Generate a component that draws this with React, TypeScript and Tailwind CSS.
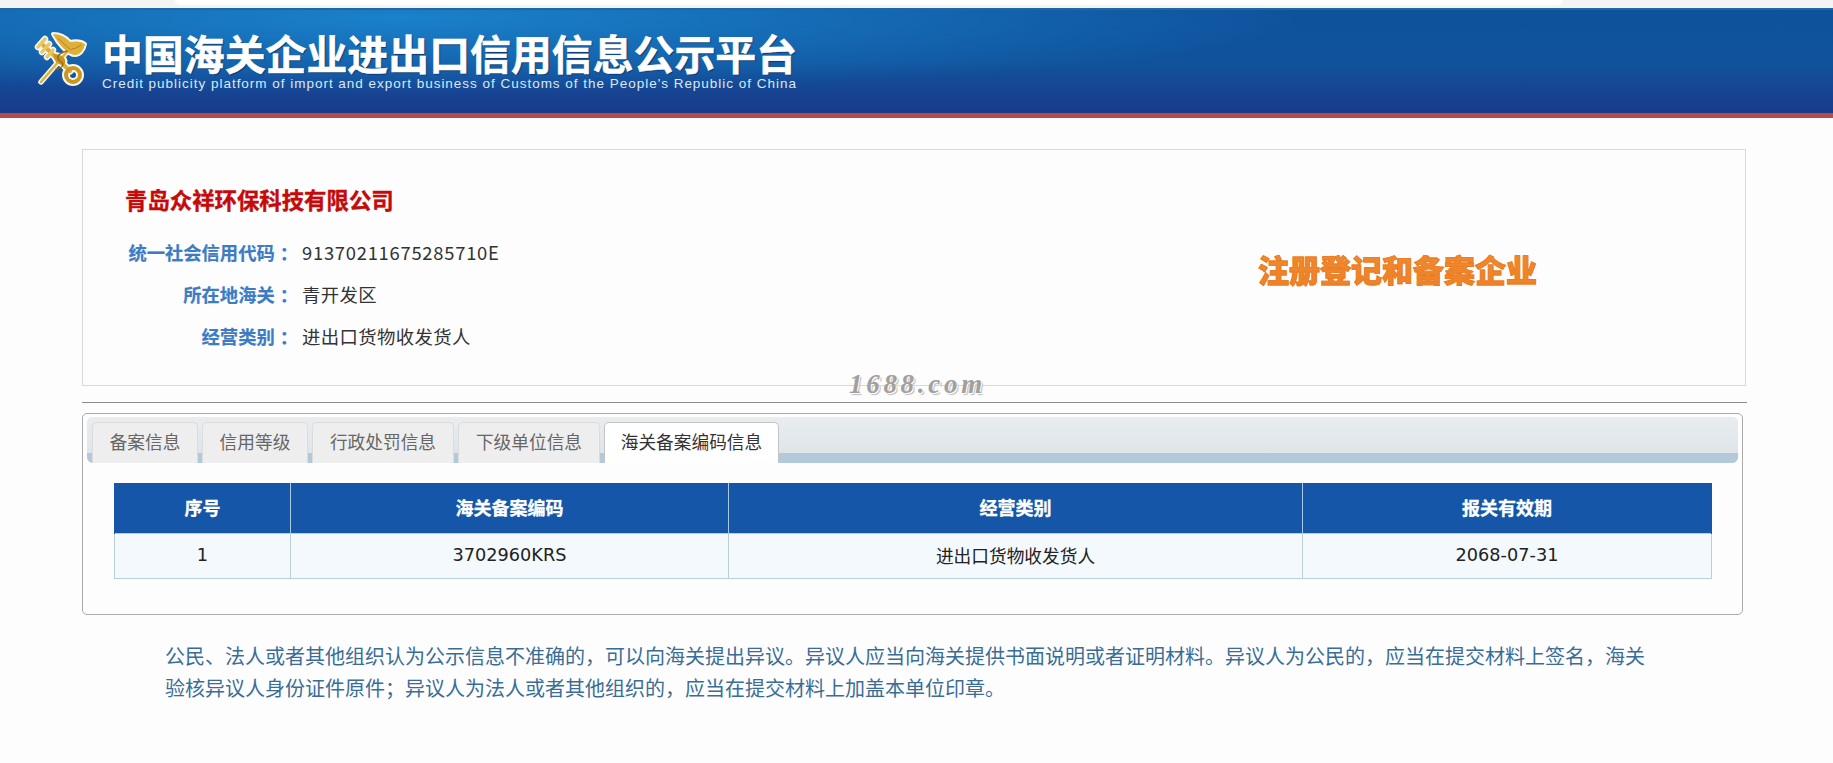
import React from 'react';

const tabs = [
  { label: '备案信息', width: 'w-[106px]' },
  { label: '信用等级', width: 'w-[106px]' },
  { label: '行政处罚信息', width: 'w-[142px]' },
  { label: '下级单位信息', width: 'w-[142px]' },
];

// full-width punctuation, same as the page
const COLON = '\uFF1A';
const COMMA = '\uFF0C';
const SEMI = '\uFF1B';

const infoRows = [
  { label: '统一社会信用代码', value: '91370211675285710E', spacing: 'tracking-[0.04em]' },
  { label: '所在地海关', value: '青开发区', spacing: 'tracking-[0.02em]' },
  { label: '经营类别', value: '进出口货物收发货人', spacing: 'tracking-[0.02em]' },
];

const headers = ['序号', '海关备案编码', '经营类别', '报关有效期'];

const notice = `公民、法人或者其他组织认为公示信息不准确的${COMMA}可以向海关提出异议。异议人应当向海关提供书面说明或者证明材料。异议人为公民的${COMMA}应当在提交材料上签名${COMMA}海关验核异议人身份证件原件${SEMI}异议人为法人或者其他组织的${COMMA}应当在提交材料上加盖本单位印章。`;

const Emblem = () => (
  <svg viewBox="0 0 54 54" className="w-[54px] h-[54px] shrink-0" fill="none">
    <g stroke="#f8f6ee" strokeLinecap="round" strokeLinejoin="round">
      <path d="M9 13 L36 39" strokeWidth="7.5" />
      <circle cx="39" cy="43" r="7" strokeWidth="8" />
      <path d="M4 15 L11 7 M8 20 L15 12 M13 25 L19 18" strokeWidth="6.5" />
      <path d="M38 14 L7 50" strokeWidth="5.5" />
      <path d="M19 2 C26 2 32 5 36 10 C41 9 47 9 51 12 C50 18 46 23 41 23 C34 23 24 12 19 2 Z" strokeWidth="4" fill="#f8f6ee" />
      <path d="M20 22 C28 22 34 27 30 33 C24 33 19 29 20 22 Z" strokeWidth="4" fill="#f8f6ee" />
    </g>
    <g strokeLinecap="round" strokeLinejoin="round">
      <path d="M9 13 L36 39" stroke="#dcae38" strokeWidth="4" />
      <circle cx="39" cy="43" r="7" stroke="#c9961f" strokeWidth="4" />
      <path d="M4 15 L11 7 M8 20 L15 12 M13 25 L19 18" stroke="#e8c766" strokeWidth="3.4" />
      <path d="M38 14 L7 50" stroke="#e0b23c" strokeWidth="2.6" />
      <path d="M19 2 C26 2 32 5 36 10 C41 9 47 9 51 12 C50 18 46 23 41 23 C34 23 24 12 19 2 Z" fill="#deb03a" />
      <path d="M24 6 C28 10 32 14 37 18 M47 13 C44 15 41 17 38 17" stroke="#a9781a" strokeWidth="0.8" />
      <path d="M20 22 C28 22 34 27 30 33 C24 33 19 29 20 22 Z" fill="#c9961f" />
      <path d="M33 19 C25 21 21 25 26 29 C31 32 29 36 22 37" stroke="#98690f" strokeWidth="1.4" />
    </g>
  </svg>
);

export default function App() {
  return (
    <div className="relative w-[1833px] h-[763px] overflow-hidden bg-[#fdfdfe] text-[#333] font-['Noto_Sans_CJK_SC','Noto_Sans',sans-serif]">
      {/* top strip */}
      <div className="h-2 bg-[#f4f4f5] pl-[175px] pr-[270px]">
        <div className="h-[5px] bg-white rounded-b-lg"></div>
      </div>

      {/* header banner */}
      <div className="h-[105px] pl-[34px] flex items-start border-t-[2px] border-[#1f68a8] bg-[radial-gradient(ellipse_900px_75px_at_400px_8px,rgba(27,132,205,0.95)_0%,rgba(27,132,205,0)_100%),linear-gradient(to_bottom,#0f529c_0%,#10539c_50%,#1b3a8c_100%)]">
        <div className="mt-[22px]"><Emblem /></div>
        <div className="ml-[14px] mt-[20px] w-[700px]">
          <div className="text-[40.9px] leading-[46px] font-bold text-white whitespace-nowrap [-webkit-text-stroke:0.5px_#ffffff] [text-shadow:1px_1px_1px_#0b2f66]">中国海关企业进出口信用信息公示平台</div>
          <div className="text-[13.5px] leading-[14px] mt-px tracking-[0.98px] text-[#dce8f3] whitespace-nowrap font-['Liberation_Sans',sans-serif]">Credit publicity platform of import and export business of Customs of the People's Republic of China</div>
        </div>
      </div>
      <div className="h-[5px] bg-[#b94a4a]"></div>

      {/* company card */}
      <div className="ml-[82px] mt-[31px] w-[1664px] h-[237px] border border-[#d8d8d8] flex justify-between">
        <div className="pl-[42px] pt-[31px]">
          <h1 className="text-[22.4px] leading-[36px] font-bold text-[#c40a0a] [-webkit-text-stroke:0.4px_#c40a0a]">青岛众祥环保科技有限公司</h1>
          <div className="mt-[15px] flex flex-col">
            {infoRows.map(row => (
              <div key={row.label} className="flex h-[42px] items-center">
                <span className="w-[173px] text-[18.3px] text-right font-bold text-[#3d7cc4] [-webkit-text-stroke:0.2px_#3d7cc4]">{row.label}<span className="pl-[5px]">{COLON}</span></span>
                <span className={`ml-[4px] text-[18.4px] text-[#333] ${row.spacing}`}>{row.value}</span>
              </div>
            ))}
          </div>
        </div>
        <div className="mr-[208px] mt-[100px] text-[31px] leading-[38px] font-black text-transparent bg-clip-text bg-gradient-to-b from-[#f08a2e] to-[#e76a14] whitespace-nowrap [-webkit-text-stroke:0.8px_#ec7a1f]">注册登记和备案企业</div>
      </div>

      {/* watermark */}
      <div className="absolute left-[849px] top-[368px] text-[27px] leading-[32px] font-bold italic tracking-[3.7px] text-[#a0a0a0] font-['Liberation_Serif',serif] [text-shadow:1px_1px_0_#fff,2px_2px_1px_#bbb]">1688.com</div>

      <div className="ml-[82px] mt-4 w-[1665px] h-px bg-[#8f8a90]"></div>

      {/* tabs panel */}
      <div className="ml-[82px] mt-[10px] w-[1661px] h-[202px] border border-[#aaa] rounded-[5px] px-1 pt-[3px]">
        <div className="relative h-[46px] rounded-t-[5px] rounded-b-[6px] bg-gradient-to-b from-[#e9edf0] to-[#dbe2e7] overflow-hidden">
          <div className="absolute left-0 right-0 bottom-0 h-[10px] bg-[#b3c9d9]"></div>
          <div className="relative flex items-end h-full pl-[5px] gap-[4px]">
            {tabs.map(tab => (
              <div key={tab.label} className={`${tab.width} h-[41px] pb-[3px] flex items-center justify-center rounded-t-[5px] border border-b-0 border-[#dcdcdc] bg-[#eeeeee] text-[17.7px] text-[#666]`}>{tab.label}</div>
            ))}
            <div className="w-[175px] h-[41px] pb-[3px] flex items-center justify-center rounded-t-[5px] border border-b-0 border-[#c4c4c4] bg-white text-[17.7px] text-[#333]">海关备案编码信息</div>
          </div>
        </div>

        <table className="ml-[27px] mt-[20px] w-[1597px] table-fixed border-collapse">
          <colgroup>
            <col className="w-[176px]" />
            <col className="w-[438px]" />
            <col className="w-[574px]" />
            <col className="w-[409px]" />
          </colgroup>
          <thead>
            <tr className="h-[50px] bg-[#1556a8]">
              {headers.map(h => (
                <th key={h} className="border-x border-[#a9c8e2] first:border-l-[#1556a8] last:border-r-[#1556a8] text-[18px] font-bold text-white [-webkit-text-stroke:0.3px_#ffffff] text-center">{h}</th>
              ))}
            </tr>
          </thead>
          <tbody>
            <tr className="h-[45px] bg-[#f3f9fc] text-[#222]">
              <td className="border border-[#b8cfdc] text-center text-[17.7px] font-['DejaVu_Sans',sans-serif]">1</td>
              <td className="border border-[#b8cfdc] text-center text-[17.7px] font-['DejaVu_Sans',sans-serif]">3702960KRS</td>
              <td className="border border-[#b8cfdc] text-center text-[17.7px]">进出口货物收发货人</td>
              <td className="border border-[#b8cfdc] text-center text-[17.7px] font-['DejaVu_Sans',sans-serif]">2068-07-31</td>
            </tr>
          </tbody>
        </table>
      </div>

      {/* notice */}
      <p className="ml-[165px] mt-[25px] w-[1485px] text-[20px] leading-[32px] text-[#3a6d96]">{notice}</p>
    </div>
  );
}
